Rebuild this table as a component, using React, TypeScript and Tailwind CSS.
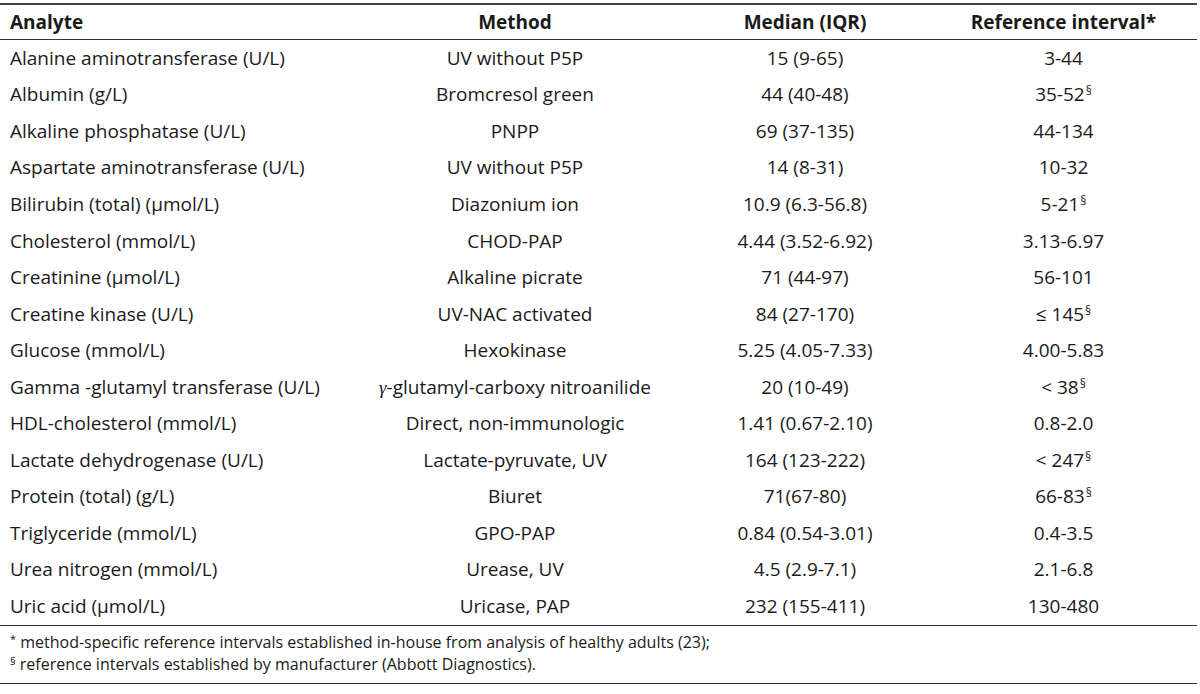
import React from "react";

type Row = [React.ReactNode, React.ReactNode, string, React.ReactNode];

const S = () => <span className="text-[12px] relative top-[-6px] ml-[1px]">§</span>;

const rows: Row[] = [
  ["Alanine aminotransferase (U/L)", "UV without P5P", "15 (9-65)", "3-44"],
  ["Albumin (g/L)", "Bromcresol green", "44 (40-48)", <>35-52<S /></>],
  ["Alkaline phosphatase (U/L)", "PNPP", "69 (37-135)", "44-134"],
  ["Aspartate aminotransferase (U/L)", "UV without P5P", "14 (8-31)", "10-32"],
  ["Bilirubin (total) (µmol/L)", "Diazonium ion", "10.9 (6.3-56.8)", <>5-21<S /></>],
  ["Cholesterol (mmol/L)", "CHOD-PAP", "4.44 (3.52-6.92)", "3.13-6.97"],
  ["Creatinine (µmol/L)", "Alkaline picrate", "71 (44-97)", "56-101"],
  ["Creatine kinase (U/L)", "UV-NAC activated", "84 (27-170)", <>≤ 145<S /></>],
  ["Glucose (mmol/L)", "Hexokinase", "5.25 (4.05-7.33)", "4.00-5.83"],
  [
    "Gamma -glutamyl transferase (U/L)",
    <>
      <span className="italic" style={{ fontFamily: '"Liberation Serif", serif' }}>γ</span>-glutamyl-carboxy nitroanilide
    </>,
    "20 (10-49)",
    <>&lt; 38<S /></>,
  ],
  ["HDL-cholesterol (mmol/L)", "Direct, non-immunologic", "1.41 (0.67-2.10)", "0.8-2.0"],
  ["Lactate dehydrogenase (U/L)", "Lactate-pyruvate, UV", "164 (123-222)", <>&lt; 247<S /></>],
  ["Protein (total) (g/L)", "Biuret", "71(67-80)", <>66-83<S /></>],
  ["Triglyceride (mmol/L)", "GPO-PAP", "0.84 (0.54-3.01)", "0.4-3.5"],
  ["Urea nitrogen (mmol/L)", "Urease, UV", "4.5 (2.9-7.1)", "2.1-6.8"],
  ["Uric acid (µmol/L)", "Uricase, PAP", "232 (155-411)", "130-480"],
];

export default function App() {
  return (
    <div
      className="w-[1200px] h-[694px] bg-white text-[#1a1a1a] pt-[3px]"
      style={{ fontFamily: '"Open Sans", "Liberation Sans", sans-serif' }}
    >
      <div className="w-[1197px] border-t-2 border-[#444] text-[19px]">
        <div className="grid grid-cols-[350px_330px_250px_267px] h-[35px] items-center font-bold border-b border-[#333]">
          <div className="pl-[10px]">Analyte</div>
          <div className="text-center">Method</div>
          <div className="text-center">Median (IQR)</div>
          <div className="text-center">Reference interval*</div>
        </div>
        {rows.map((r, i) => (
          <div
            key={i}
            className="grid grid-cols-[350px_330px_250px_267px] h-[36.55px] items-center leading-none"
          >
            <div className="pl-[10px] whitespace-nowrap">{r[0]}</div>
            <div className="text-center whitespace-nowrap">{r[1]}</div>
            <div className="text-center whitespace-nowrap">{r[2]}</div>
            <div className="text-center whitespace-nowrap">{r[3]}</div>
          </div>
        ))}
        <div className="border-t border-b border-[#333] h-[59px] flex flex-col justify-center pl-[10px] text-[16px] leading-[21px]">
          <div>
            <span className="text-[11px] relative top-[-5px]">*</span> method-specific reference intervals established in-house from analysis of healthy adults (23);
          </div>
          <div>
            <span className="text-[11px] relative top-[-5px]">§</span> reference intervals established by manufacturer (Abbott Diagnostics).
          </div>
        </div>
      </div>
    </div>
  );
}
